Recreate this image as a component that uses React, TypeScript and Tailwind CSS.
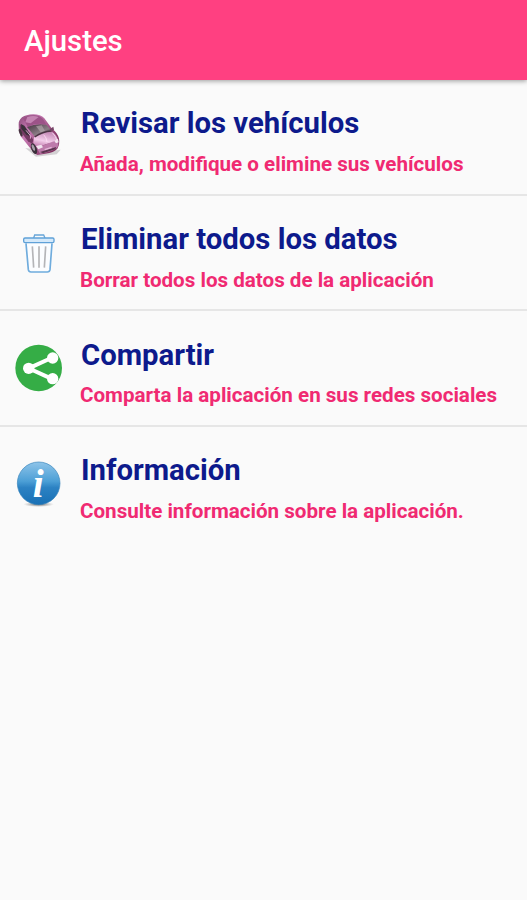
import React from 'react';

interface SettingsItem {
  title: string;
  description: string;
  icon: React.ReactNode;
}

const CarIcon: React.FC = () => (
  <svg viewBox="0 0 180 180" className="w-[60px] h-[60px]">
    <defs>
      <linearGradient id="carBody" x1="0" y1="0" x2="1" y2="0.6">
        <stop offset="0" stopColor="#8a4a78" />
        <stop offset="0.35" stopColor="#c77bb4" />
        <stop offset="1" stopColor="#80305f" />
      </linearGradient>
      <linearGradient id="carHood" x1="0.6" y1="0" x2="0.3" y2="1">
        <stop offset="0" stopColor="#c184b2" />
        <stop offset="0.55" stopColor="#f3cdea" />
        <stop offset="1" stopColor="#b769a0" />
      </linearGradient>
      <linearGradient id="carGlass" x1="0" y1="0" x2="1" y2="1">
        <stop offset="0" stopColor="#44343f" />
        <stop offset="0.6" stopColor="#8b7d86" />
        <stop offset="1" stopColor="#453845" />
      </linearGradient>
    </defs>
    <path d="M52 132 L84 158 L146 151 L158 137 L120 142 Z" fill="#b9b5b9" opacity="0.6" />
    <path d="M32 62 Q31 50 42 40 Q54 32 76 31 Q98 31 109 43 L132 74 Q149 86 153 104 Q156 120 148 134 Q138 146 112 149 L88 153 Q78 150 71 138 L38 97 Q30 80 32 62 Z" fill="url(#carBody)" />
    <path d="M35 59 L53 77 L76 107 L73 119 L60 112 L36 80 Z" fill="#743a63" />
    <path d="M39 60 L49 65 L65 88 L63 96 L54 91 L40 74 Z" fill="#3b303b" />
    <path d="M45 43 Q58 34 78 34 Q96 35 105 45 L115 62 Q88 54 59 69 Z" fill="#9c5388" />
    <path d="M58 39 Q76 33 92 39 L68 58 L52 55 Z" fill="#d49ac4" opacity="0.7" />
    <path d="M57 69 Q87 57 116 63 L130 80 Q105 81 81 98 Z" fill="url(#carGlass)" />
    <path d="M84 67 L101 64 L111 81 L98 85 Z" fill="#b5aaae" opacity="0.65" />
    <path d="M78 100 Q101 81 130 82 Q146 92 150 108 L134 116 Q111 118 88 134 L76 120 Z" fill="url(#carHood)" />
    <path d="M80 99 Q104 82 130 81" fill="none" stroke="#493342" strokeWidth="4" />
    <path d="M107 92 Q116 101 117 114 M133 86 Q144 97 147 110" fill="none" stroke="#ffe2f6" strokeWidth="3" opacity="0.75" />
    <path d="M88 134 Q116 117 150 109 Q154 123 147 132 Q128 145 96 149 Z" fill="#bd7bab" />
    <path d="M96 144 L145 129 L142 136 L105 148 Z" fill="#5a354f" />
    <path d="M84 126 L100 122 L105 130 L91 136 Z M139 111 L150 104 L152 115 L144 118 Z" fill="#f2e4ef" />
    <ellipse cx="78" cy="134" rx="8" ry="17" transform="rotate(-20 78 134)" fill="#393039" />
    <ellipse cx="76" cy="131" rx="4" ry="10" transform="rotate(-20 76 131)" fill="#a79ea8" />
    <ellipse cx="38" cy="86" rx="4" ry="12" transform="rotate(-20 38 86)" fill="#44343f" />
    <path d="M125 76 L136 68 L138 77 L130 84 Z" fill="#754466" />
    <path d="M54 79 L68 96 L67 104" fill="none" stroke="#dba8ce" strokeWidth="3" />
    <path d="M110 137 L131 130" stroke="#e4b9d8" strokeWidth="4" />
  </svg>
);

const TrashIcon: React.FC = () => (
  <svg viewBox="0 -13 180 180" className="w-[60px] h-[60px]">
    <path d="M54 57 L61 136 Q62 143 69 143 H118 Q125 143 126 136 L132 57" fill="#fbfdff" stroke="#6facdd" strokeWidth="5" />
    <path d="M77 41 L80 32 H107 L111 41" fill="none" stroke="#67a5d8" strokeWidth="4" />
    <rect x="47" y="41" width="91" height="14" rx="4" fill="#d4e9fa" stroke="#5fa1d8" strokeWidth="4" />
    <path d="M73 66 L77 130 M93 66 V130 M113 66 L109 130" fill="none" stroke="#b4b5b8" strokeWidth="5" />
  </svg>
);

const ShareIcon: React.FC = () => (
  <svg viewBox="0 -8 180 180" className="w-[60px] h-[60px]">
    <circle cx="92" cy="91" r="70" fill="#35ad46" />
    <path d="M130 61 L62 92 L130 123" fill="none" stroke="#fff" strokeWidth="12" />
    <circle cx="62" cy="92" r="17" fill="#fff" />
    <circle cx="134" cy="61" r="17" fill="#fff" />
    <circle cx="134" cy="123" r="17" fill="#fff" />
  </svg>
);

const InfoIcon: React.FC = () => (
  <svg viewBox="0 -9 180 180" className="w-[60px] h-[60px]">
    <defs>
      <linearGradient id="infoBall" x1="0" y1="0" x2="0" y2="1">
        <stop offset="0" stopColor="#8ec4e9" />
        <stop offset="0.45" stopColor="#4c9fd6" />
        <stop offset="0.6" stopColor="#2c82c3" />
        <stop offset="1" stopColor="#1870b5" />
      </linearGradient>
      <radialGradient id="infoShadow">
        <stop offset="0" stopColor="#555" />
        <stop offset="1" stopColor="#999" stopOpacity="0" />
      </radialGradient>
    </defs>
    <ellipse cx="92" cy="151" rx="46" ry="8" fill="url(#infoShadow)" />
    <circle cx="92" cy="88" r="64" fill="url(#infoBall)" stroke="#3683bb" strokeWidth="2" />
    <text x="91" y="128" textAnchor="middle" fill="#fff" className="font-['Liberation_Serif',serif] font-bold italic text-[118px]">i</text>
  </svg>
);

const items: SettingsItem[] = [
  { title: 'Revisar los vehículos', description: 'Añada, modifique o elimine sus vehículos', icon: <CarIcon /> },
  { title: 'Eliminar todos los datos', description: 'Borrar todos los datos de la aplicación', icon: <TrashIcon /> },
  { title: 'Compartir', description: 'Comparta la aplicación en sus redes sociales', icon: <ShareIcon /> },
  { title: 'Información', description: 'Consulte información sobre la aplicación.', icon: <InfoIcon /> },
];

const App: React.FC = () => {
  return (
    <div className="min-h-screen bg-[#fafafa] font-['Roboto',sans-serif]">
      <header className="relative h-20 bg-[#ff4081] px-6 flex items-center shadow-[0_1px_5px_rgba(0,0,0,0.4)]">
        <h1 className="pt-px text-white text-[29.3px] leading-9 font-medium">Ajustes</h1>
      </header>

      <ul>
        {items.map((item) => (
          <li key={item.title} className="h-[115.7px] pl-2 pt-6 flex items-start border-b-2 border-[#e6e6e6] last:border-b-0">
            {item.icon}
            <div className="pl-3">
              <h2 className="pt-[0.3px] pl-px text-[29.3px] leading-[38px] font-bold text-[#0d1a8c] whitespace-nowrap">{item.title}</h2>
              <p className="mt-[7.7px] text-[20.6px] leading-7 font-bold text-[#f02a72] whitespace-nowrap">{item.description}</p>
            </div>
          </li>
        ))}
      </ul>
    </div>
  );
};

export default App;
